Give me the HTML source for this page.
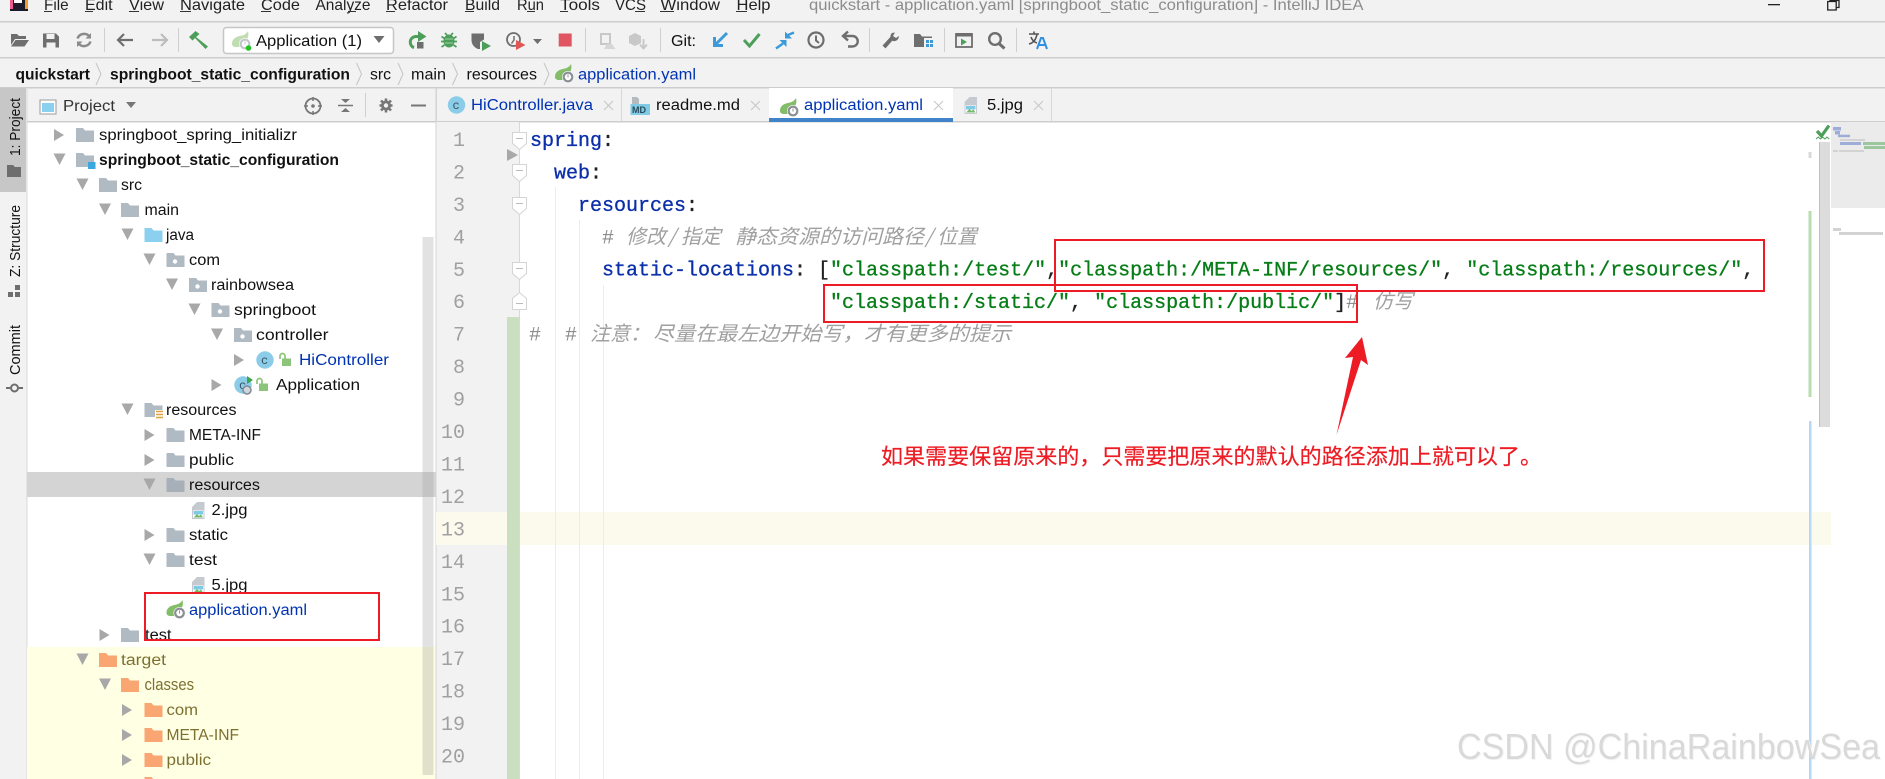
<!DOCTYPE html>
<html lang="zh">
<head>
<meta charset="utf-8">
<title>quickstart - application.yaml</title>
<style>
html,body{margin:0;padding:0;background:#fff;width:1885px;height:779px;overflow:hidden}
svg{display:block}
symbol{overflow:visible}
text{font-family:"Liberation Sans","Noto Sans CJK SC",sans-serif;font-size:15.5px;fill:#111}
.b{font-weight:bold}
.m{font-size:16px;fill:#222}
.l{fill:#0033b3}
.y{fill:#7c7030}
.n{font-family:"Liberation Mono",monospace;font-size:20px;fill:#a0a0a0;text-anchor:end}
.c{font-family:"Liberation Mono",monospace;font-size:20px;stroke-width:.3px}
.k{fill:#0a2fa8;stroke:#0a2fa8}
.s{fill:#067d17;stroke:#067d17}
.p{fill:#222;stroke:#222}
.h{fill:#8c8c8c;stroke:none}
.z{font-family:"Noto Sans CJK SC","Liberation Sans",sans-serif;font-size:20px;font-style:italic;fill:#a0a0a0}
.r{font-family:"Noto Sans CJK SC","Liberation Sans",sans-serif;font-size:21.6px;fill:#ed1c24;stroke:#ed1c24;stroke-width:.2px}
</style>
</head>
<body>
<svg width="1885" height="779" viewBox="0 0 1885 779" xmlns="http://www.w3.org/2000/svg">
<defs>
<symbol id="fo" width="18" height="14" viewBox="0 0 18 14"><path d="M0 0h7l2 2.500h9V14H0z"/></symbol>
<symbol id="pk" width="18" height="14" viewBox="0 0 18 14"><path d="M0 0h7l2 2.500h9V14H0z" fill="#b0bac2"/><circle cx="8.500" cy="8.500" r="2.200" fill="#fff"/></symbol>
<symbol id="ar" width="10" height="10" viewBox="0 0 10 10"><path d="M0-1L10 5 0 11z" fill="#a8a8a8"/></symbol>
<symbol id="ad" width="11" height="10" viewBox="0 0 11 10"><path d="M-.5-.5h12L5.500 11z" fill="#a8a8a8"/></symbol>
<symbol id="sp" width="19" height="19" viewBox="0 0 19 19"><path d="M0 13C0 7 5 5.500 10 4.500 12.500 4 15 2 16 0c1 4 0 7.500-2 10l-5 6H4c-2 0-4-1-4-3z" fill="#84bd68"/><circle cx="13" cy="13" r="6" fill="#fff"/><circle cx="13" cy="13" r="4.300" fill="none" stroke="#8b9095" stroke-width="2.200"/><path d="M13 10.500v3" stroke="#8b9095" stroke-width="1"/></symbol>
<symbol id="jp" width="13" height="17" viewBox="0 0 13 17"><path d="M5 0h7.500v17H0V5z" fill="#c5cad0"/><rect x="1" y="8.500" width="10.500" height="7.500" fill="#fff"/><rect x="1.500" y="9" width="9.500" height="3.500" fill="#7fcbe6"/><path d="M1.500 15.500l3.500-3.500 2 2 2-1.500 2 3z" fill="#74b86a"/></symbol>
<symbol id="lk" width="12" height="13" viewBox="0 0 12 13"><rect x="3" y="5.500" width="9" height="7.500" fill="#8cc47a"/><path d="M1 6V3a2.500 2.500 0 0 1 5 0v3" fill="none" stroke="#8cc47a" stroke-width="1.700"/></symbol>
<symbol id="fm" width="15" height="18" viewBox="0 0 15 18"><path d="M.5.500h14v11L7.500 17.500.5 11.500z" fill="#fff" stroke="#d4d4d4"/><path d="M4 6.500h7" stroke="#bbb" stroke-width="1"/></symbol>
<symbol id="fu" width="15" height="18" viewBox="0 0 15 18"><path d="M.5 17.500h14V6.500L7.500.500.5 6.500z" fill="#fff" stroke="#d4d4d4"/><path d="M4 11.500h7" stroke="#bbb" stroke-width="1"/></symbol>
<symbol id="x" width="11" height="11" viewBox="0 0 11 11"><path d="M1 1l9 9M10 1l-9 9" stroke="#c8c8c8" stroke-width="1.100" fill="none"/></symbol>
</defs>

<!-- base -->
<rect width="1885" height="122" fill="#f2f2f2"/>
<rect y="122" width="1885" height="657" fill="#fff"/>
<rect y="21" width="1885" height="1.500" fill="#cdcdcd"/>
<rect y="57" width="1885" height="1.500" fill="#cdcdcd"/>
<rect y="87" width="1885" height="1.500" fill="#cdcdcd"/>
<rect y="121" width="1885" height="1.500" fill="#cdcdcd"/>

<!-- menu -->
<rect x="10" y="0" width="18" height="11" fill="#1b1b2b"/><rect x="10" y="0" width="3" height="9" fill="#ef5a8c"/><rect x="25" y="0" width="3" height="9" fill="#f59a2c"/><rect x="14" y="0" width="8" height="3" fill="#fff"/>
<text class="m" x="44" y="10" textLength="24.600" lengthAdjust="spacingAndGlyphs">File</text>
<text class="m" x="85" y="10" textLength="27.600" lengthAdjust="spacingAndGlyphs">Edit</text>
<text class="m" x="129" y="10" textLength="35" lengthAdjust="spacingAndGlyphs">View</text>
<text class="m" x="180" y="10" textLength="65" lengthAdjust="spacingAndGlyphs">Navigate</text>
<text class="m" x="261" y="10" textLength="39" lengthAdjust="spacingAndGlyphs">Code</text>
<text class="m" x="315.500" y="10" textLength="55" lengthAdjust="spacingAndGlyphs">Analyze</text>
<text class="m" x="386" y="10" textLength="62" lengthAdjust="spacingAndGlyphs">Refactor</text>
<text class="m" x="465" y="10" textLength="35" lengthAdjust="spacingAndGlyphs">Build</text>
<text class="m" x="517" y="10" textLength="27" lengthAdjust="spacingAndGlyphs">Run</text>
<text class="m" x="560" y="10" textLength="40" lengthAdjust="spacingAndGlyphs">Tools</text>
<text class="m" x="615" y="10" textLength="31" lengthAdjust="spacingAndGlyphs">VCS</text>
<text class="m" x="660.500" y="10" textLength="59.500" lengthAdjust="spacingAndGlyphs">Window</text>
<text class="m" x="736.500" y="10" textLength="34" lengthAdjust="spacingAndGlyphs">Help</text>
<g fill="#333">
<rect x="44" y="11" width="8" height="1"/><rect x="85" y="11" width="8" height="1"/><rect x="129" y="11" width="10" height="1"/><rect x="180" y="11" width="11" height="1"/><rect x="261" y="11" width="10" height="1"/><rect x="348" y="11" width="8" height="1"/><rect x="386" y="11" width="9" height="1"/><rect x="465" y="11" width="9" height="1"/><rect x="527" y="11" width="8" height="1"/><rect x="560" y="11" width="8" height="1"/><rect x="635" y="11" width="10" height="1"/><rect x="660" y="11" width="14" height="1"/><rect x="736" y="11" width="11" height="1"/>
</g>
<text x="809" y="10" style="font-size:16px;fill:#8c8c8c" textLength="554.500" lengthAdjust="spacingAndGlyphs">quickstart - application.yaml [springboot_static_configuration] - IntelliJ IDEA</text>
<rect x="1768" y="4" width="12" height="1.300" fill="#222"/>
<path d="M1830 0v1M1827.700 1.500h8.500v8.500h-8.500zM1830 1V.500h9v7h-3" fill="none" stroke="#222" stroke-width="1.300"/>

<!-- toolbar -->
<path d="M11 34h6l2 2h7v3H15l-4 6zM15.500 40H29l-4.500 6.500H11z" fill="#6e6e6e"/>
<path d="M43 33.500h13l3 3v11H43zM46.500 34v5h8v-5zM46.500 42.500v5h9v-5z" fill="#6e6e6e" fill-rule="evenodd"/>
<path d="M89.500 36.500A7 7 0 0 0 77.500 38.500M78.500 43.500A7 7 0 0 0 90.500 41.500" fill="none" stroke="#8a8a8a" stroke-width="2.500"/>
<path d="M91 33v5.500h-5.500zM77 47v-5.500h5.500z" fill="#8a8a8a"/>
<rect x="104" y="28" width="1" height="24" fill="#cfcfcf"/>
<path d="M118 40h15M124 34l-6 6 6 6" fill="none" stroke="#6e6e6e" stroke-width="2.200"/>
<path d="M167 40h-15M161 34l6 6-6 6" fill="none" stroke="#bdbdbd" stroke-width="2.200"/>
<rect x="178" y="28" width="1" height="24" fill="#cfcfcf"/>
<path d="M189 37l6.500-6 4 3-3.500 3 12 9.500-2.500 2.500-10.500-11-2.500 2.500z" fill="#4d9e5a"/>
<rect x="223.500" y="27.500" width="170" height="26" rx="3" fill="#fff" stroke="#c6c6c6" stroke-width="1.500"/>
<use href="#sp" x="232" y="31" opacity=".5"/>
<circle cx="248.500" cy="48" r="2.800" fill="#22c322"/>
<text x="256" y="46" style="font-size:16px" textLength="106" lengthAdjust="spacingAndGlyphs">Application (1)</text>
<path d="M373.500 36h11l-5.500 7z" fill="#6e6e6e"/>
<!-- rerun -->
<path d="M420 36.500h-4.500a5.800 5.800 0 0 0-1.500 11.200" fill="none" stroke="#4d9e5a" stroke-width="3"/>
<path d="M418 31l8.500 5.500-8.500 5.500z" fill="#4d9e5a"/>
<rect x="417" y="42" width="6.500" height="6.500" fill="#6e6e6e"/>
<!-- debug -->
<ellipse cx="449" cy="41" rx="5.500" ry="6.500" fill="#4d9e5a"/>
<path d="M441.500 36.500l3 2M456.500 36.500l-3 2M441 41.500h3M457 41.500h-3M441.500 47l3-2M456.500 47l-3-2M445 33l2 2M453 33l-2 2" stroke="#4d9e5a" stroke-width="1.700"/>
<path d="M445 39h8M445 43h8" stroke="#9fd0a6" stroke-width="1"/>
<!-- coverage -->
<path d="M471.500 33.500h12.500v6l-4 2.500v7h-2c-4-1.500-6.500-5-6.500-9z" fill="#6e6e6e"/>
<path d="M482 41l9 5-9 5z" fill="#4d9e5a"/>
<!-- profiler -->
<circle cx="513.500" cy="39.500" r="6.500" fill="none" stroke="#6e6e6e" stroke-width="1.800"/>
<path d="M514 36v4l-2.500 3.500" fill="none" stroke="#6e6e6e" stroke-width="1.500"/>
<path d="M516 40l9.500 5-9.500 5z" fill="#e05555"/>
<path d="M533 39h9l-4.500 5z" fill="#6e6e6e"/>
<rect x="558.700" y="33.500" width="13" height="13" fill="#e05561"/>
<rect x="585" y="28" width="1" height="24" fill="#cfcfcf"/>
<!-- disabled -->
<path d="M600 33h11v12h-11zM602 35v8h7v-8z" fill="#c8c8c8" fill-rule="evenodd"/><path d="M604 49l3-5h5l3.500 5z" fill="#d6d6d6"/>
<path d="M629 36l6-3 6 3v7l-6 3-6-3z" fill="#c8c8c8"/><path d="M643.500 39v8M640 44.500l3.500 4 3.500-4" stroke="#c8c8c8" stroke-width="2" fill="none"/>
<rect x="660" y="28" width="1" height="24" fill="#cfcfcf"/>
<text x="671" y="46" style="font-size:16px" textLength="25" lengthAdjust="spacingAndGlyphs">Git:</text>
<path d="M727 33l-12 12M714.500 37v8.500h8.500" fill="none" stroke="#3b9ad9" stroke-width="3"/>
<path d="M744 40l5.500 6 10-12" fill="none" stroke="#4d9e5a" stroke-width="3"/>
<!-- merge -->
<path d="M786.500 40v7l-7-7z" fill="#3b9ad9"/><path d="M783 43.500l-7 5" stroke="#3b9ad9" stroke-width="2.500"/>
<path d="M785 38.500v-7l7 7z" fill="#3b9ad9"/><path d="M788 35l6-2.500" stroke="#3b9ad9" stroke-width="2.500"/>
<circle cx="816" cy="40" r="7.500" fill="none" stroke="#6e6e6e" stroke-width="2.200"/><path d="M816 35.500v5l3 2.500" fill="none" stroke="#6e6e6e" stroke-width="2"/>
<path d="M845 36h7.500a5 5 0 0 1 0 10.500H848" fill="none" stroke="#6e6e6e" stroke-width="2.400"/><path d="M848 31.500l-5 4.500 5 4.500" fill="none" stroke="#6e6e6e" stroke-width="2.400"/>
<rect x="869" y="28" width="1" height="24" fill="#cfcfcf"/>
<path d="M884 47l9-10" stroke="#6e6e6e" stroke-width="4"/><path d="M892 33a5 5 0 0 0 1 8 5 5 0 0 0 6-5l-3 2-3-2 2-3.500z" fill="#6e6e6e"/>
<path d="M914 34h6l2 2.500h10V47h-18z" fill="#6e6e6e"/><rect x="924" y="38" width="10" height="10" fill="#f2f2f2"/><path d="M926 40h3v3h-3zM930 40h3v3h-3zM926 44h3v3h-3zM930 44h3v3h-3z" fill="#3b9ad9"/>
<rect x="944" y="28" width="1" height="24" fill="#cfcfcf"/>
<rect x="956" y="34" width="16" height="13" fill="none" stroke="#6e6e6e" stroke-width="1.800"/><rect x="956" y="33" width="16" height="3.500" fill="#6e6e6e"/><path d="M961 38.500l6 3.500-6 3.500z" fill="#4d9e5a"/>
<circle cx="995" cy="39" r="5.800" fill="none" stroke="#6e6e6e" stroke-width="2.400"/><path d="M999 43.500l5.500 5" stroke="#6e6e6e" stroke-width="3"/>
<rect x="1016" y="28" width="1" height="24" fill="#cfcfcf"/>
<path d="M1029 34h10M1034 31.500v2.500M1037 34c-1 6-4 9-8 10M1031 37c1 3 3 5 6 6" fill="none" stroke="#555" stroke-width="1.600"/>
<path d="M1037 49l4-11h2l4 11M1039 45h6" fill="none" stroke="#2f8fe0" stroke-width="2"/>

<!-- breadcrumb -->
<text class="b" x="15.500" y="79.500" textLength="74.500" lengthAdjust="spacingAndGlyphs">quickstart</text>
<text class="b" x="110" y="79.500" textLength="240" lengthAdjust="spacingAndGlyphs">springboot_static_configuration</text>
<text x="370" y="79.500" textLength="21" lengthAdjust="spacingAndGlyphs">src</text>
<text x="411" y="79.500" textLength="35" lengthAdjust="spacingAndGlyphs">main</text>
<text x="466.500" y="79.500" textLength="70.500" lengthAdjust="spacingAndGlyphs">resources</text>
<use href="#sp" x="555" y="64"/>
<text class="l" x="578" y="79.500" textLength="118" lengthAdjust="spacingAndGlyphs">application.yaml</text>
<g fill="none" stroke="#c4c4c4" stroke-width="1">
<path d="M96 63l5 11-5 11M356.500 63l5 11-5 11M398 63l5 11-5 11M452.500 63l5 11-5 11M544 63l5 11-5 11"/>
</g>

<!-- tabs -->
<rect x="436" y="88" width="1" height="34" fill="#d4d4d4"/>
<circle cx="456.500" cy="105" r="8.700" fill="#8bcde8"/>
<text x="452.500" y="109" style="font-size:12px;font-family:'Liberation Mono',monospace;fill:#37505f">c</text>
<text class="l" x="471" y="110" textLength="122" lengthAdjust="spacingAndGlyphs">HiController.java</text>
<use href="#x" x="603" y="100"/>
<rect x="621" y="88" width="1" height="33" fill="#d8d8d8"/>
<path d="M632 97h5l2 2v5h-7z" fill="#b5babf"/>
<rect x="630.500" y="104" width="19.500" height="11" fill="#7fcbe6"/>
<text x="632" y="113" style="font-size:9px;font-weight:bold;fill:#2b4a5c">MD</text>
<text x="656" y="110" textLength="84" lengthAdjust="spacingAndGlyphs">readme.md</text>
<use href="#x" x="750" y="100"/>
<rect x="769" y="88" width="184" height="30" fill="#fff"/>
<rect x="769" y="118" width="184" height="4" fill="#4083c9"/>
<use href="#sp" x="780" y="98"/>
<text class="l" x="804" y="110" textLength="119" lengthAdjust="spacingAndGlyphs">application.yaml</text>
<use href="#x" x="933" y="100"/>
<use href="#jp" x="964.500" y="97"/>
<text x="987" y="110" textLength="36" lengthAdjust="spacingAndGlyphs">5.jpg</text>
<use href="#x" x="1033" y="100"/>
<rect x="1051" y="88" width="1" height="33" fill="#d8d8d8"/>

<!-- left strip -->
<rect x="0" y="88" width="27" height="691" fill="#f2f2f2"/>
<rect x="0" y="88" width="26" height="104" fill="#c7c7c7"/>
<rect x="26.500" y="88" width="1" height="691" fill="#d8d8d8"/>
<text transform="translate(20,156) rotate(-90)" style="font-size:14.500px" textLength="58" lengthAdjust="spacingAndGlyphs">1: Project</text>
<path d="M7 165h6l2 2h6v10H7z" fill="#6e6e6e"/>
<text transform="translate(20,277) rotate(-90)" style="font-size:14.500px" textLength="72" lengthAdjust="spacingAndGlyphs">Z: Structure</text>
<path d="M8 292h5v5H8zM15 292h5v5h-5zM15 285h5v5h-5z" fill="#6e6e6e"/>
<text transform="translate(20,375) rotate(-90)" style="font-size:14.500px" textLength="50" lengthAdjust="spacingAndGlyphs">Commit</text>
<circle cx="14.500" cy="388" r="3.500" fill="none" stroke="#6e6e6e" stroke-width="2"/><path d="M6 388h4M19 388h4" stroke="#6e6e6e" stroke-width="2"/>

<!-- project header -->
<rect x="40" y="100" width="16" height="14" fill="#fff" stroke="#9a9a9a"/>
<rect x="42" y="103" width="12" height="9" fill="#8bd0ee"/>
<text x="63" y="111" style="font-size:16px;fill:#333" textLength="52" lengthAdjust="spacingAndGlyphs">Project</text>
<path d="M126 102h10l-5 6z" fill="#777"/>
<circle cx="313" cy="106" r="7.500" fill="none" stroke="#777" stroke-width="1.800"/><circle cx="313" cy="106" r="1.800" fill="#777"/><path d="M313 97v4M313 111v4M304 106h4M318 106h4" stroke="#777" stroke-width="1.500"/>
<path d="M338 105.500h15" stroke="#777" stroke-width="1.500"/><path d="M341 99h9l-4.500 4zM341 112h9l-4.500-4z" fill="#777"/>
<rect x="365" y="93" width="1" height="24" fill="#d0d0d0"/>
<path d="M386 98.500v14M379.500 105.500h13M381 100.500l10 10M391 100.500l-10 10" stroke="#777" stroke-width="2.600"/><circle cx="386" cy="105.500" r="5" fill="#777"/><circle cx="386" cy="105.500" r="2.200" fill="#f2f2f2"/>
<rect x="411" y="104.500" width="15" height="2" fill="#777"/>

<!-- tree bg -->
<rect x="27" y="647" width="409" height="132" fill="#ffffe4"/>
<rect x="422.500" y="237" width="11" height="410" fill="#e2e2e2"/>
<rect x="422.500" y="647" width="11" height="128" fill="#e1e1cb"/>
<rect x="27" y="472" width="409" height="25" fill="#d4d4d4"/>
<rect x="422.500" y="472" width="11" height="25" fill="#c4c4c4"/>

<!-- tree -->
<g fill="#b0bac2">
<use href="#ar" x="54" y="130"/><use href="#fo" x="76" y="128"/>
<text x="99" y="140" textLength="198" lengthAdjust="spacingAndGlyphs">springboot_spring_initializr</text>

<use href="#ad" x="54" y="154"/><use href="#fo" x="76" y="153"/><rect x="88" y="162" width="7.500" height="7" fill="#3aa8dc"/>
<text class="b" x="99" y="165" textLength="240" lengthAdjust="spacingAndGlyphs">springboot_static_configuration</text>

<use href="#ad" x="77" y="179"/><use href="#fo" x="99" y="178"/>
<text x="121" y="190" textLength="21" lengthAdjust="spacingAndGlyphs">src</text>

<use href="#ad" x="99.500" y="204"/><use href="#fo" x="121" y="203"/>
<text x="144.500" y="215" textLength="34.500" lengthAdjust="spacingAndGlyphs">main</text>

<use href="#ad" x="122" y="229"/><use href="#fo" x="144.500" y="228" fill="#8bd0ee"/>
<text x="166" y="240" textLength="28" lengthAdjust="spacingAndGlyphs">java</text>

<use href="#ad" x="144" y="254"/><use href="#pk" x="166.500" y="253"/>
<text x="189" y="265" textLength="31" lengthAdjust="spacingAndGlyphs">com</text>

<use href="#ad" x="166.500" y="279"/><use href="#pk" x="189" y="278"/>
<text x="211" y="290" textLength="83" lengthAdjust="spacingAndGlyphs">rainbowsea</text>

<use href="#ad" x="189" y="304"/><use href="#pk" x="211.500" y="303"/>
<text x="234" y="315" textLength="82" lengthAdjust="spacingAndGlyphs">springboot</text>

<use href="#ad" x="211.500" y="329"/><use href="#pk" x="234" y="328"/>
<text x="256" y="340" textLength="72.500" lengthAdjust="spacingAndGlyphs">controller</text>

<use href="#ar" x="234" y="355"/>
<circle cx="265" cy="360" r="8.700" fill="#8bcde8"/>
<text x="261" y="364" style="font-size:12px;font-family:'Liberation Mono',monospace;fill:#37505f">c</text>
<use href="#lk" x="279" y="353"/>
<text class="l" x="299" y="365" textLength="90" lengthAdjust="spacingAndGlyphs">HiController</text>

<use href="#ar" x="211.500" y="380"/>
<circle cx="243" cy="385" r="8.700" fill="#8bcde8"/>
<text x="239" y="389" style="font-size:12px;font-family:'Liberation Mono',monospace;fill:#37505f">c</text>
<path d="M247 376l6 4-6 4z" fill="#3fa648"/>
<circle cx="247" cy="390" r="4" fill="#cfd6dc" stroke="#808a92" stroke-width="1.500"/>
<use href="#lk" x="256" y="378"/>
<text x="276" y="390" textLength="84" lengthAdjust="spacingAndGlyphs">Application</text>

<use href="#ad" x="122" y="404"/><use href="#fo" x="144.500" y="403"/>
<rect x="155" y="410" width="8" height="10" fill="#fff"/>
<path d="M156 411.500h7M156 414.500h7M156 417.500h7" stroke="#e0a040" stroke-width="1.500"/>
<text x="166" y="415" textLength="70.500" lengthAdjust="spacingAndGlyphs">resources</text>

<use href="#ar" x="144.500" y="430"/><use href="#fo" x="166.500" y="428"/>
<text x="189" y="440" textLength="72" lengthAdjust="spacingAndGlyphs">META-INF</text>

<use href="#ar" x="144.500" y="455"/><use href="#fo" x="166.500" y="453"/>
<text x="189" y="465" textLength="45" lengthAdjust="spacingAndGlyphs">public</text>

<use href="#ad" x="144" y="479"/><use href="#fo" x="166.500" y="478" fill="#a7b0b8"/>
<text x="189" y="490" textLength="71" lengthAdjust="spacingAndGlyphs">resources</text>

<use href="#jp" x="192" y="502"/>
<text x="211.500" y="515" textLength="36" lengthAdjust="spacingAndGlyphs">2.jpg</text>

<use href="#ar" x="144.500" y="530"/><use href="#fo" x="166.500" y="528"/>
<text x="189" y="540" textLength="39" lengthAdjust="spacingAndGlyphs">static</text>

<use href="#ad" x="144" y="554"/><use href="#fo" x="166.500" y="553"/>
<text x="189" y="565" textLength="28" lengthAdjust="spacingAndGlyphs">test</text>

<use href="#jp" x="192" y="577"/>
<text x="211.500" y="590" textLength="36" lengthAdjust="spacingAndGlyphs">5.jpg</text>

<use href="#sp" x="166.500" y="600"/>
<text class="l" x="189" y="615" textLength="118" lengthAdjust="spacingAndGlyphs">application.yaml</text>

<use href="#ar" x="99.500" y="630"/><use href="#fo" x="121" y="628"/>
<text x="145" y="640" textLength="26.500" lengthAdjust="spacingAndGlyphs">test</text>

<use href="#ad" x="77" y="654"/><use href="#fo" x="99" y="653" fill="#f9a672"/>
<text class="y" x="121" y="665" textLength="45" lengthAdjust="spacingAndGlyphs">target</text>

<use href="#ad" x="99.500" y="679"/><use href="#fo" x="121" y="678" fill="#f9a672"/>
<text class="y" x="144.500" y="690" textLength="49.500" lengthAdjust="spacingAndGlyphs" style="font-size:16.500px">classes</text>

<use href="#ar" x="122" y="705"/><use href="#fo" x="144.500" y="703" fill="#f9a672"/>
<text class="y" x="166.500" y="715" textLength="31.500" lengthAdjust="spacingAndGlyphs">com</text>

<use href="#ar" x="122" y="730"/><use href="#fo" x="144.500" y="728" fill="#f9a672"/>
<text class="y" x="166.500" y="740" textLength="72.500" lengthAdjust="spacingAndGlyphs">META-INF</text>

<use href="#ar" x="122" y="755"/><use href="#fo" x="144.500" y="753" fill="#f9a672"/>
<text class="y" x="166.500" y="765" textLength="44.500" lengthAdjust="spacingAndGlyphs">public</text>

<use href="#fo" x="144.500" y="777" fill="#f9a672"/>
</g>

<!-- gutter -->
<rect x="436" y="122" width="83" height="657" fill="#f2f2f2"/>
<rect x="435.500" y="88" width="1" height="691" fill="#d4d4d4"/>
<rect x="519" y="122" width="1" height="657" fill="#d8d8d8"/>
<rect x="507" y="317" width="12" height="462" fill="#c9dfc0"/>
<rect x="436" y="512" width="71" height="33" fill="#fcfaed"/>
<rect x="520" y="512" width="1311" height="33" fill="#fcfaed"/>
<g fill="#ececec">
<rect x="555" y="187" width="1" height="592"/>
<rect x="579" y="220" width="1" height="559"/>
<rect x="603" y="285" width="1" height="494"/>
</g>
<path d="M507 149l11 6-11 6z" fill="#a8a8a8"/>
<use href="#fm" x="512" y="132"/>
<use href="#fm" x="512" y="164"/>
<use href="#fm" x="512" y="197"/>
<use href="#fm" x="512" y="262"/>
<use href="#fu" x="512" y="292"/>

<text class="n" x="465" y="146">1</text>
<text class="n" x="465" y="178.500">2</text>
<text class="n" x="465" y="211">3</text>
<text class="n" x="465" y="243.300">4</text>
<text class="n" x="465" y="275.800">5</text>
<text class="n" x="465" y="308.200">6</text>
<text class="n" x="465" y="340.700">7</text>
<text class="n" x="465" y="373.100">8</text>
<text class="n" x="465" y="405.600">9</text>
<text class="n" x="465" y="438">10</text>
<text class="n" x="465" y="470.500">11</text>
<text class="n" x="465" y="502.900">12</text>
<text class="n" x="465" y="535.400">13</text>
<text class="n" x="465" y="567.800">14</text>
<text class="n" x="465" y="600.300">15</text>
<text class="n" x="465" y="632.700">16</text>
<text class="n" x="465" y="665.200">17</text>
<text class="n" x="465" y="697.600">18</text>
<text class="n" x="465" y="730.100">19</text>
<text class="n" x="465" y="762.500">20</text>

<!-- code -->
<text class="c k" x="530" y="146">spring<tspan class="p">:</tspan></text>
<text class="c k" x="554" y="178.500">web<tspan class="p">:</tspan></text>
<text class="c k" x="578" y="211">resources<tspan class="p">:</tspan></text>
<text class="c h" x="602" y="243.300">#</text>
<text class="z" x="626" y="243.300">修改</text>
<text class="z" x="668" y="243.300">/</text>
<text class="z" x="681" y="243.300" textLength="40" lengthAdjust="spacingAndGlyphs">指定</text>
<text class="z" x="735" y="243.300" textLength="189" lengthAdjust="spacingAndGlyphs">静态资源的访问路径</text>
<text class="z" x="925" y="243.300">/</text>
<text class="z" x="937" y="243.300" textLength="40" lengthAdjust="spacingAndGlyphs">位置</text>

<text class="c k" x="602" y="275.500">static-locations<tspan class="p">: [</tspan><tspan class="s">"classpath:/test/"</tspan><tspan class="p">,</tspan><tspan class="s">"classpath:/META-INF/resources/"</tspan><tspan class="p">, </tspan><tspan class="s">"classpath:/resources/"</tspan><tspan class="p">,</tspan></text>
<text class="c s" x="830" y="308">"classpath:/static/"<tspan class="p">, </tspan>"classpath:/public/"<tspan class="p">]</tspan><tspan class="h">#</tspan></text>
<text class="z" x="1373" y="308.200">仿写</text>

<text class="c h" x="529" y="340.700">#</text>
<text class="c h" x="565" y="340.700">#</text>
<text class="z" x="590" y="340.700">注意：</text>
<text class="z" x="653" y="340.700" textLength="358" lengthAdjust="spacingAndGlyphs">尽量在最左边开始写，才有更多的提示</text>

<!-- right side -->
<rect x="1831" y="122" width="54" height="86" fill="#ebebeb"/>
<rect x="1819" y="142" width="11" height="285" fill="#dcdcdc"/>
<rect x="1819" y="142" width="1" height="285" fill="#c0c0c0"/>
<path d="M1817 131l4.500 5 7.500-10.500" fill="none" stroke="#4d9e5a" stroke-width="3.200"/>
<path d="M1816 139l2.200-2 2.200 2 2.200-2 2.200 2 2.200-2 2.200 2" fill="none" stroke="#4d9e5a" stroke-width="1"/>
<rect x="1808.500" y="152" width="3" height="6" fill="#d8d8d8"/>
<rect x="1808.500" y="211" width="3" height="186" fill="#b8deb0"/>
<rect x="1809" y="421" width="2.500" height="358" fill="#b8d6f5"/>
<g fill="#9dadd8">
<rect x="1833" y="127" width="8" height="3.500"/>
<rect x="1835" y="131" width="5" height="3.500"/>
<rect x="1838" y="134.700" width="12" height="2.500"/>
<rect x="1840" y="142" width="21" height="3"/>
</g>
<g fill="#9cc69c">
<rect x="1863" y="142" width="22" height="3"/>
<rect x="1864" y="146" width="21" height="3"/>
</g>
<g fill="#d3d3d3">
<rect x="1840" y="139" width="25" height="2"/>
<rect x="1833" y="150" width="5" height="2"/>
<rect x="1839" y="150" width="25" height="2"/>
<rect x="1833" y="228" width="8" height="3"/>
<rect x="1839" y="232" width="44" height="3"/>
</g>

<!-- annotations -->
<g fill="none" stroke="#ed1c24" stroke-width="2">
<rect x="1055" y="240" width="709" height="51"/>
<rect x="824" y="285" width="533" height="37"/>
<rect x="145" y="593" width="234" height="47"/>
</g>
<path d="M1362 337l6 28-7-5-24.500 75 16.500-78-8 1z" fill="#ed1c24"/>
<text class="r" x="881" y="464" textLength="661" lengthAdjust="spacingAndGlyphs">如果需要保留原来的，只需要把原来的默认的路径添加上就可以了。</text>

<!-- watermark -->
<text x="1458" y="760" style="font-size:36px;fill:#f4f4f4" textLength="423" lengthAdjust="spacingAndGlyphs">CSDN @ChinaRainbowSea</text>
<text x="1457" y="759" style="font-size:36px;fill:#d9d9d9" textLength="423" lengthAdjust="spacingAndGlyphs">CSDN @ChinaRainbowSea</text>
</svg>
</body>
</html>
